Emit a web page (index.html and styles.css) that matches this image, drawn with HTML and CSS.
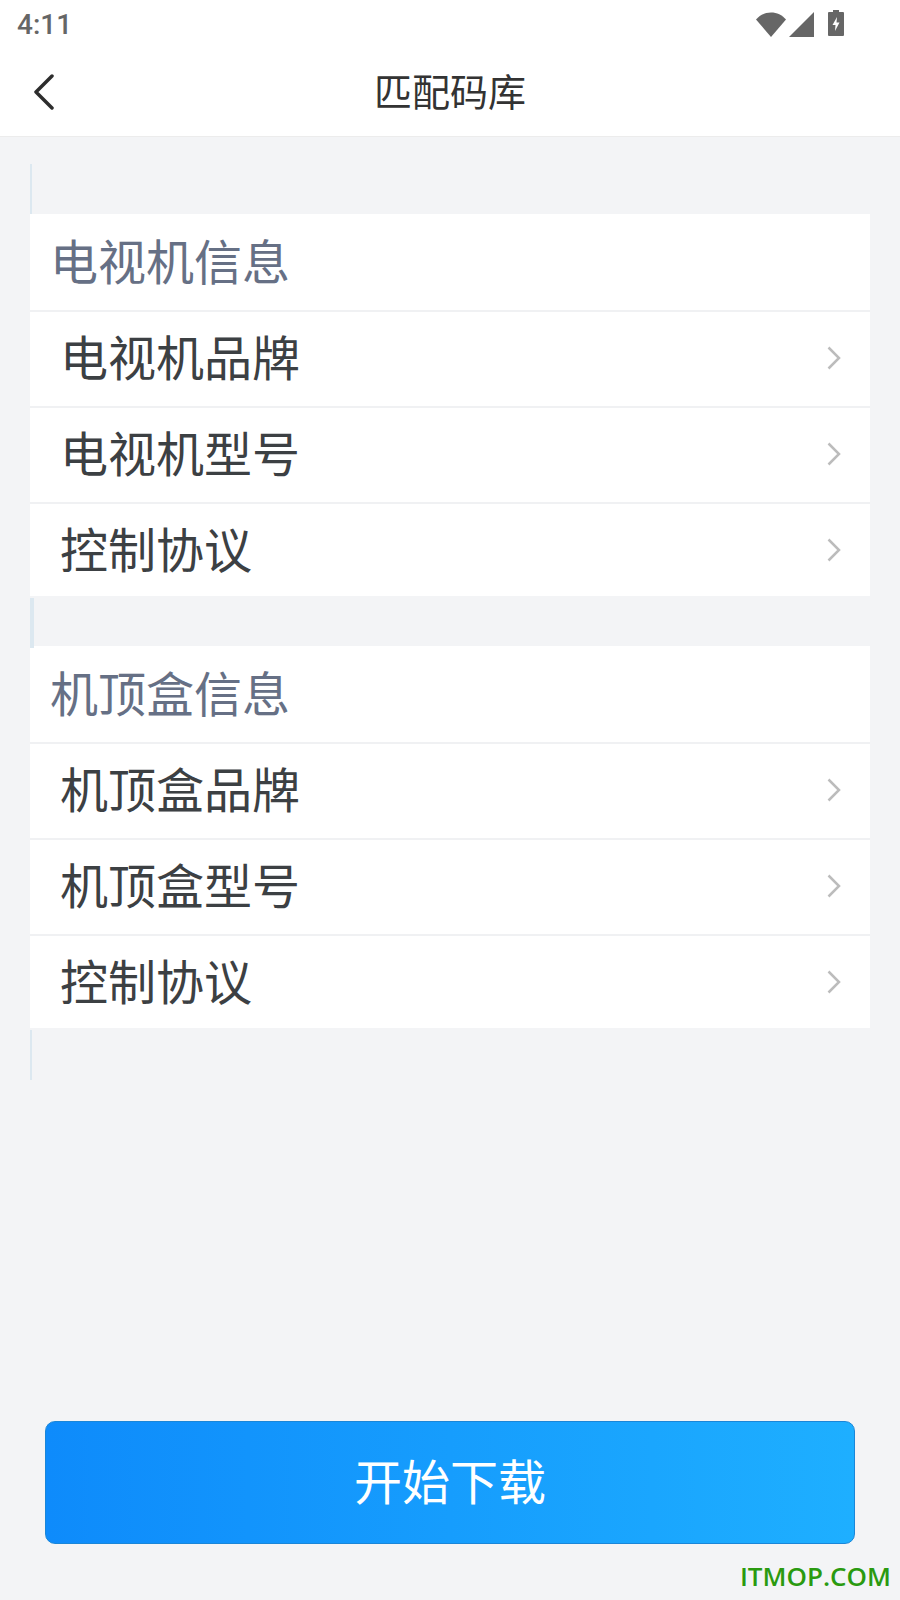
FILE: index.html
```html
<!DOCTYPE html>
<html lang="zh-CN">
<head>
  <meta charset="UTF-8">
  <meta name="viewport" content="width=device-width, initial-scale=1.0">
  <title>匹配码库</title>
  <link rel="stylesheet" href="styles.css">
</head>
<body>
  <div class="top">
    <div class="status">
      <span class="time">4:11</span>
      <div class="status-icons">
        <svg class="wifi" width="30" height="25" viewBox="0 0 30 25"><path d="M0 7.500C4 3 9 .5 15 .5S26 3 30 7.500L15 25z"/></svg>
        <svg class="signal" width="25" height="25" viewBox="0 0 25 25"><path d="M0 25L25 0v25z"/></svg>
        <svg class="battery" width="16" height="26" viewBox="0 0 16 26"><path fill-rule="evenodd" d="M5 0h6v2h4a1 1 0 0 1 1 1v22a1 1 0 0 1-1 1H1a1 1 0 0 1-1-1V3a1 1 0 0 1 1-1h4zM9 7L4.500 15h3L7 21l4.500-8.500h-3z"/></svg>
      </div>
    </div>
    <div class="nav">
      <svg class="back" width="24" height="36" viewBox="0 0 24 36"><path d="M20 2L4 18l16 16"/></svg>
      <h1>匹配码库</h1>
    </div>
  </div>

  <div class="content">
    <div class="stripe"></div>
    <div class="card">
      <div class="card-title">电视机信息</div>
      <div class="row row-tv"><span>电视机品牌</span><svg class="arrow" width="14" height="24" viewBox="0 0 14 24"><path d="M1.500 1.500L12 12 1.500 22.500"/></svg></div>
      <div class="row row-tv"><span>电视机型号</span><svg class="arrow" width="14" height="24" viewBox="0 0 14 24"><path d="M1.500 1.500L12 12 1.500 22.500"/></svg></div>
      <div class="row row-last"><span>控制协议</span><svg class="arrow" width="14" height="24" viewBox="0 0 14 24"><path d="M1.500 1.500L12 12 1.500 22.500"/></svg></div>
    </div>
    <div class="stripe stripe-wide"></div>
    <div class="card">
      <div class="card-title">机顶盒信息</div>
      <div class="row"><span>机顶盒品牌</span><svg class="arrow" width="14" height="24" viewBox="0 0 14 24"><path d="M1.500 1.500L12 12 1.500 22.500"/></svg></div>
      <div class="row"><span>机顶盒型号</span><svg class="arrow" width="14" height="24" viewBox="0 0 14 24"><path d="M1.500 1.500L12 12 1.500 22.500"/></svg></div>
      <div class="row row-last"><span>控制协议</span><svg class="arrow" width="14" height="24" viewBox="0 0 14 24"><path d="M1.500 1.500L12 12 1.500 22.500"/></svg></div>
    </div>
    <div class="stripe"></div>
  </div>

  <button class="download">开始下载</button>
  <div class="watermark">ITMOP.COM</div>
</body>
</html>
```

FILE: styles.css
```css
body {
  margin: 0;
  height: 1600px;
  display: flex;
  flex-direction: column;
  position: relative;
  overflow: hidden;
  background-color: #f3f4f6;
  font-family: "Noto Sans CJK SC", "Noto Sans", sans-serif;
}
.top {
  height: 136px;
  background: white;
  border-bottom: 1px solid #ececec;
}
.status {
  height: 48px;
  display: flex;
  justify-content: space-between;
  align-items: center;
  padding: 0 56px 0 17px;
}
.time {
  font-family: Roboto, sans-serif;
  font-size: 28px;
  font-weight: 500;
  color: #666;
}
.status-icons {
  display: flex;
  align-items: center;
  height: 48px;
}
.status-icons svg {
  fill: #666;
}
.signal {
  margin-left: 3px;
}
.battery {
  margin-left: 14px;
  margin-bottom: 2px;
}
.nav {
  height: 88px;
  display: flex;
  align-items: center;
  justify-content: center;
  position: relative;
  padding-bottom: 6px;
  box-sizing: border-box;
}
.back {
  position: absolute;
  left: 32px;
  top: 26px;
  fill: none;
  stroke: #2d2d2d;
  stroke-width: 3.5;
  stroke-linecap: round;
  stroke-linejoin: round;
}
h1 {
  margin: 0;
  font-size: 38px;
  font-weight: 400;
  color: #333;
}
.content {
  flex: 1;
  padding: 27px 30px 0;
}
.stripe {
  height: 50px;
  width: 2px;
  background: #dce8f0;
}
.stripe-wide {
  width: 4px;
  height: 50px;
  margin-top: 2px;
  margin-bottom: -2px;
  position: relative;
}
.card {
  background: white;
  margin-bottom: 2px;
}
.card-title {
  height: 98px;
  line-height: 90px;
  padding-left: 20px;
  font-size: 48px;
  color: #667085;
  border-bottom: 2px solid #f0f1f3;
  box-sizing: border-box;
}
.row {
  height: 96px;
  box-sizing: border-box;
  display: flex;
  align-items: center;
  justify-content: space-between;
  padding: 0 29px 8px 30px;
  font-size: 48px;
  color: #3c4043;
  border-bottom: 2px solid #f0f1f3;
}
.row-last {
  height: 92px;
  padding-bottom: 6px;
  border-bottom: none;
}
.arrow {
  fill: none;
  stroke: #bcbcbc;
  stroke-width: 2.500;
  margin-top: 6px;
}
.row-last .arrow {
  margin-top: 6px;
}
.download {
  position: absolute;
  left: 45px;
  top: 1421px;
  width: 810px;
  height: 123px;
  border: 1px solid #1a86d8;
  border-radius: 10px;
  background: linear-gradient(to right, #0e8bfb, #1eafff);
  color: white;
  font-family: inherit;
  font-size: 48px;
  padding: 0 0 8px;
}
.watermark {
  position: absolute;
  right: 9px;
  top: 1558px;
  font-family: "Open Sans", sans-serif;
  font-size: 26px;
  font-weight: 600;
  color: #2a9a10;
}
```
